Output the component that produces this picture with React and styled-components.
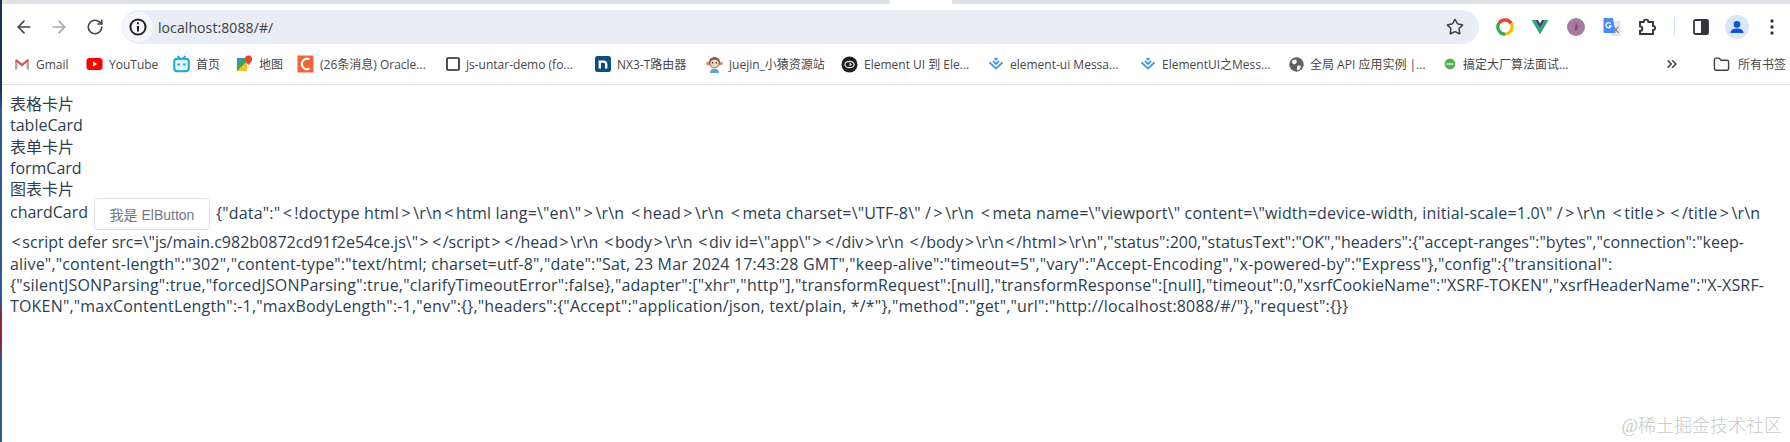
import React from "react";
import styled, { createGlobalStyle } from "styled-components";
import { ArrowLeft, ArrowRight, RotateCw, Star, ChevronsRight, Folder } from "lucide-react";

const GlobalStyle = createGlobalStyle`
  html, body {
    margin: 0;
    padding: 0;
    background: #fff;
  }
  body {
    width: 1790px;
    height: 442px;
    overflow: hidden;
    font-family: "Open Sans", "Noto Sans CJK SC", sans-serif;
  }
`;

const Page = styled.div`
  position: relative;
  height: 442px;
  &::before {
    content: "";
    position: absolute;
    left: 0;
    top: 0;
    bottom: 0;
    width: 2px;
    background: linear-gradient(
      #1c2f55 0,
      #1c2f55 90px,
      #2a5a90 110px,
      #2a5a90 300px,
      #8a2a3a 315px,
      #8a2a3a 345px,
      #2a5a90 360px
    );
  }
`;

const TabStrip = styled.div`
  height: 4px;
  background: #dee1e6;
  display: flex;
  padding-left: 890px;
`;

const ActiveTab = styled.div`
  width: 62px;
  background: #fff;
`;

const Toolbar = styled.div`
  height: 40px;
  display: flex;
  align-items: flex-start;
  padding: 6px 0 0 6px;
  box-sizing: border-box;
`;

const NavButton = styled.div`
  width: 36px;
  height: 34px;
  display: flex;
  align-items: center;
  justify-content: center;
  color: ${(p) => p.$color || "#44474a"};
`;

const AddressBar = styled.div`
  flex: none;
  width: 1357px;
  height: 34px;
  margin-left: 9px;
  margin-right: 8px;
  background: #e9edf6;
  border-radius: 17px;
  display: flex;
  align-items: center;
  padding-right: 15px;
  box-sizing: border-box;
`;

const SiteInfo = styled.div`
  width: 30px;
  height: 30px;
  margin-left: 1px;
  border-radius: 50%;
  background: #f6f8fc;
  display: flex;
  align-items: center;
  justify-content: center;
  color: #222;
`;

const Url = styled.span`
  flex: 1;
  margin-left: 5px;
  font-size: 14px;
  letter-spacing: 0.1px;
  color: #3c4043;
`;

const ExtensionIcon = styled.div`
  width: 36px;
  height: 34px;
  display: flex;
  align-items: center;
  justify-content: center;
`;

const ToolbarRule = styled.div`
  width: 1px;
  height: 18px;
  margin: 8px 8px 0 9px;
  background: #d3e3fd;
`;

const Bookmarks = styled.div`
  height: 41px;
  display: flex;
  align-items: center;
  padding-left: 14px;
  box-sizing: border-box;
  border-bottom: 1px solid #dfe1e5;
`;

const Bookmark = styled.div`
  width: ${(p) => p.$width}px;
  flex: none;
  display: flex;
  align-items: center;
  gap: ${(p) => p.$gap ?? 6}px;
  font-size: 12px;
  color: #474747;
  white-space: nowrap;
`;

const BookmarkRule = styled.div`
  width: 1px;
  height: 18px;
  margin: 0 18px 0 0;
  background: #d3e3fd;
`;

const Content = styled.div`
  padding: 9px 0 0 10px;
  font-size: 16px;
  line-height: 21.3px;
  color: #2c3e50;
`;

const Line = styled.div`
  white-space: nowrap;
`;

const ButtonLine = styled(Line)`
  margin: -2px 0 2px;
`;

const ResponseText = styled.span`
  letter-spacing: ${(p) => p.$spacing}px;
`;

const Angle = styled.span`
  margin: 0 ${(p) => p.$margin}px;
`;

const ElButton = styled.button`
  height: 32px;
  width: 116px;
  margin: 0 6px;
  padding: 0;
  background: #fff;
  border: 1px solid #dcdfe6;
  border-radius: 4px;
  color: #77797e;
  font-family: "Liberation Sans", "Noto Sans CJK SC", sans-serif;
  font-size: 14px;
  vertical-align: middle;
`;

const Watermark = styled.div`
  position: absolute;
  right: 8px;
  top: 414px;
  font-family: "Liberation Serif", "Noto Sans CJK SC", serif;
  font-size: 18px;
  font-weight: 300;
  line-height: 24px;
  color: #cacaca;
`;

const InfoIcon = () => (
  <svg width="20" height="20" viewBox="0 0 20 20" fill="none" stroke="currentColor" strokeWidth="2">
    <circle cx="10" cy="10" r="7.6" />
    <path d="M10 9v5.4" />
    <path d="M10 5.2v2" />
  </svg>
);

const GmailIcon = () => (
  <svg width="16" height="16" viewBox="0 0 16 16">
    <path d="M1 13.5V4.5h2.4v9zM12.6 13.5v-9H15v9z" fill="#b9a5a3" />
    <path d="M1 4.6 2.2 3 8 7.6 13.8 3 15 4.6 8 10.4z" fill="#d0544a" />
  </svg>
);

const YoutubeIcon = () => (
  <svg width="17" height="16" viewBox="0 0 17 16">
    <rect x="0.5" y="2" width="16" height="12" rx="3" fill="#f00" />
    <path d="M7 5.4 11.2 8 7 10.6z" fill="#fff" />
  </svg>
);

const BilibiliIcon = () => (
  <svg width="17" height="18" viewBox="0 0 17 18" fill="none">
    <path d="M4.6 0.8 7 3.6M12.4 0.8 10 3.6" stroke="#1ea6d6" strokeWidth="1.8" />
    <rect x="1.2" y="3.8" width="14.6" height="12.4" rx="3" fill="#dff3fa" stroke="#1ea6d6" strokeWidth="2" />
    <path d="M4.4 9.4h2.4M10.2 9.4h2.4" stroke="#1ea6d6" strokeWidth="2" />
  </svg>
);

const MapsIcon = () => (
  <svg width="17" height="18" viewBox="0 0 17 18">
    <path d="M1 3h10v13H1z" fill="#34a853" />
    <path d="M1 16 11 6v10z" fill="#fbc02d" />
    <path d="M1 3h6L1 9z" fill="#4285f4" />
    <path d="M12.5 0.5a3.6 3.6 0 0 1 3.6 3.6c0 2.5-3.6 6-3.6 6s-3.6-3.5-3.6-6a3.6 3.6 0 0 1 3.6-3.6z" fill="#ea4335" />
  </svg>
);

const CsdnIcon = () => (
  <svg width="17" height="18" viewBox="0 0 17 18">
    <rect x="0.5" y="0.5" width="16" height="17" fill="#f0643c" />
    <path d="M12.5 4.5a5 5.2 0 1 0 0 9" fill="none" stroke="#fff" strokeWidth="2" />
  </svg>
);

const PageIcon = () => (
  <svg width="14" height="14" viewBox="0 0 14 14" fill="none">
    <rect x="1" y="1" width="12" height="12" rx="1" stroke="#222" strokeWidth="1.6" />
  </svg>
);

const NuxtIcon = () => (
  <svg width="16" height="16" viewBox="0 0 16 16">
    <rect width="16" height="16" rx="2.5" fill="#0f4c81" />
    <path d="M4.8 12.5V5.6h4a2.4 2.4 0 0 1 2.4 2.4v4.5" fill="none" stroke="#fff" strokeWidth="2.4" />
  </svg>
);

const MonkeyIcon = () => (
  <svg width="17" height="17" viewBox="0 0 17 17">
    <circle cx="2" cy="7.5" r="1.8" fill="#c98f6a" />
    <circle cx="15" cy="7.5" r="1.8" fill="#c98f6a" />
    <circle cx="8.5" cy="6.5" r="5.6" fill="#8a5a44" />
    <ellipse cx="8.5" cy="7.6" rx="4.2" ry="3.8" fill="#f5d5b8" />
    <circle cx="6.6" cy="6.8" r="0.8" fill="#222" />
    <circle cx="10.4" cy="6.8" r="0.8" fill="#222" />
    <path d="M4 17c0-3 2-4.6 4.5-4.6S13 14 13 17z" fill="#5aa5c8" />
  </svg>
);

const ElementDarkIcon = () => (
  <svg width="17" height="17" viewBox="0 0 17 17">
    <circle cx="8.5" cy="8.5" r="8" fill="#1d1f24" />
    <ellipse cx="8.5" cy="8.5" rx="4.6" ry="3.2" fill="none" stroke="#e6e6e6" strokeWidth="1.3" />
    <path d="M8.5 6.5 11 8.5 8.5 10.5z" fill="#e6e6e6" />
  </svg>
);

const ElementBlueIcon = () => (
  <svg width="16" height="16" viewBox="0 0 16 16" fill="none" stroke="#4a9ae8" strokeWidth="1.9">
    <path d="M1.5 6.5 8 12.5l6.5-6" />
    <path d="M5 5 8 8l3-3" />
    <path d="M6.7 2.2 8 3.6l1.3-1.4" />
  </svg>
);

const GlobeIcon = () => (
  <svg width="15" height="15" viewBox="0 0 15 15">
    <circle cx="7.5" cy="7.5" r="7.2" fill="#5f6368" />
    <path d="M3 3.5 7 2.6 8 5 5.6 7.4 3.4 6.6zM9 8.2l3.2.8-1.6 3.6-2.2 1-.6-3z" fill="#fff" />
  </svg>
);

const ArticleIcon = () => (
  <svg width="12" height="12" viewBox="0 0 12 12">
    <circle cx="6" cy="6" r="5.4" fill="#4eb04e" />
    <path d="M2.5 6h7" stroke="#d9f2d9" strokeWidth="1.6" />
  </svg>
);

const ChromeRingIcon = () => (
  <svg width="18" height="18" viewBox="0 0 18 18" fill="none" strokeWidth="3.2">
    <path d="M3 5.2A7 7 0 0 1 15.2 5.5" stroke="#ea4335" />
    <path d="M15.2 5.5A7 7 0 0 1 9.5 16" stroke="#fbbc04" />
    <path d="M9.5 16A7 7 0 0 1 3 5.2" stroke="#34a853" />
  </svg>
);

const VueIcon = () => (
  <svg width="18" height="16" viewBox="0 0 20 18">
    <path d="M0.5 1h4.2L10 10.4 15.3 1h4.2L10 17.5z" fill="#35a37f" />
    <path d="M4.7 1h3L10 5l2.3-4h3L10 10.4z" fill="#34495e" />
  </svg>
);

const AvatarDotIcon = () => (
  <svg width="18" height="18" viewBox="0 0 18 18">
    <circle cx="9" cy="9" r="9" fill="#a77aa4" />
    <path d="M9 4.5 11 9l-2 4.5-1.5-2.5z" fill="#8a4f5c" />
  </svg>
);

const TranslateIcon = () => (
  <svg width="18" height="20" viewBox="0 0 18 20">
    <path d="M8 4h9.5v15H8z" fill="#e4e7ec" />
    <path d="M10.5 9.5l5 6.5M15.5 9.5l-5 6.5" stroke="#6f7a8a" strokeWidth="1.1" />
    <path d="M0.5 1h9.5l2.4 15H0.5z" fill="#4a8af4" />
    <path d="M7.6 6.6a2.6 2.6 0 1 0 .4 2.4H5.8" fill="none" stroke="#fff" strokeWidth="1.3" />
  </svg>
);

const PuzzleIcon = () => (
  <svg width="18" height="20" viewBox="0 0 18 20" fill="none" stroke="#33373c" strokeWidth="1.9">
    <path d="M2 5h3.6a2.4 2.4 0 0 1 4.8 0H15v4a2 2 0 0 1 0 4.2V17H2v-3a2.3 2.3 0 0 0 0-4.6z" />
  </svg>
);

const SidePanelIcon = () => (
  <svg width="16" height="16" viewBox="0 0 16 16">
    <rect x="1" y="1" width="14" height="14" rx="1.6" fill="none" stroke="#33373c" strokeWidth="1.8" />
    <rect x="8" y="1" width="7" height="14" fill="#33373c" />
  </svg>
);

const ProfileIcon = () => (
  <svg width="24" height="24" viewBox="0 0 24 24">
    <circle cx="12" cy="12" r="12" fill="#d9e6fb" />
    <circle cx="12" cy="9.4" r="3.3" fill="#0b57d0" />
    <path d="M5.5 18c0-3 3-4.4 6.5-4.4s6.5 1.4 6.5 4.4z" fill="#0b57d0" />
  </svg>
);

const MenuDots = () => (
  <svg width="4" height="18" viewBox="0 0 4 18" fill="#33373c">
    <circle cx="2" cy="3" r="1.7" />
    <circle cx="2" cy="9" r="1.7" />
    <circle cx="2" cy="15" r="1.7" />
  </svg>
);

const bookmarks = [
  { label: "Gmail", width: 72, icon: <GmailIcon /> },
  { label: "YouTube", width: 87, icon: <YoutubeIcon /> },
  { label: "首页", width: 63, icon: <BilibiliIcon /> },
  { label: "地图", width: 61, icon: <MapsIcon /> },
  { label: "(26条消息) Oracle...", width: 149, icon: <CsdnIcon /> },
  { label: "js-untar-demo (fo...", width: 149, icon: <PageIcon /> },
  { label: "NX3-T路由器", width: 111, icon: <NuxtIcon /> },
  { label: "juejin_小猿资源站", width: 135, icon: <MonkeyIcon /> },
  { label: "Element UI 到 Ele...", width: 147, icon: <ElementDarkIcon /> },
  { label: "element-ui Messa...", width: 152, icon: <ElementBlueIcon /> },
  { label: "ElementUI之Mess...", width: 149, icon: <ElementBlueIcon /> },
  { label: "全局 API 应用实例 |...", width: 155, icon: <GlobeIcon /> },
  { label: "搞定大厂算法面试...", width: 220, gap: 7, icon: <ArticleIcon /> },
];

const firstLine = String.raw`{"data":"<!doctype html>\r\n<html lang=\"en\">\r\n <head>\r\n <meta charset=\"UTF-8\" />\r\n <meta name=\"viewport\" content=\"width=device-width, initial-scale=1.0\" />\r\n <title></title>\r\n`;

// the response wraps at these points in the screenshot
const wrappedLines = [
  {
    text: String.raw`<script defer src=\"js/main.c982b0872cd91f2e54ce.js\"></script></head>\r\n <body>\r\n <div id=\"app\"></div>\r\n </body>\r\n</html>\r\n","status":200,"statusText":"OK","headers":{"accept-ranges":"bytes","connection":"keep-`,
    spacing: 0,
    angle: 1.6,
  },
  {
    text: String.raw`alive","content-length":"302","content-type":"text/html; charset=utf-8","date":"Sat, 23 Mar 2024 17:43:28 GMT","keep-alive":"timeout=5","vary":"Accept-Encoding","x-powered-by":"Express"},"config":{"transitional":`,
    spacing: 0.18,
  },
  {
    text: String.raw`{"silentJSONParsing":true,"forcedJSONParsing":true,"clarifyTimeoutError":false},"adapter":["xhr","http"],"transformRequest":[null],"transformResponse":[null],"timeout":0,"xsrfCookieName":"XSRF-TOKEN","xsrfHeaderName":"X-XSRF-`,
    spacing: 0.18,
  },
  {
    text: String.raw`TOKEN","maxContentLength":-1,"maxBodyLength":-1,"env":{},"headers":{"Accept":"application/json, text/plain, */*"},"method":"get","url":"http://localhost:8088/#/"},"request":{}}`,
    spacing: 0.18,
  },
];

// the angle brackets sit wider in the original font
const withAngles = (text, margin) =>
  text.split(/([<>])/).map((part, index) =>
    part === "<" || part === ">" ? <Angle key={index} $margin={margin}>{part}</Angle> : part
  );

const App = () => {
  return (
    <Page>
      <GlobalStyle />
      <TabStrip>
        <ActiveTab />
      </TabStrip>
      <Toolbar>
        <NavButton><ArrowLeft size={20} strokeWidth={2} /></NavButton>
        <NavButton $color="#a5a8ac"><ArrowRight size={20} strokeWidth={2} /></NavButton>
        <NavButton><RotateCw size={18} strokeWidth={2.2} /></NavButton>
        <AddressBar>
          <SiteInfo><InfoIcon /></SiteInfo>
          <Url>localhost:8088/#/</Url>
          <Star size={18} strokeWidth={2} color="#3c4043" />
        </AddressBar>
        <ExtensionIcon><ChromeRingIcon /></ExtensionIcon>
        <ExtensionIcon><VueIcon /></ExtensionIcon>
        <ExtensionIcon><AvatarDotIcon /></ExtensionIcon>
        <ExtensionIcon><TranslateIcon /></ExtensionIcon>
        <ExtensionIcon><PuzzleIcon /></ExtensionIcon>
        <ToolbarRule />
        <ExtensionIcon><SidePanelIcon /></ExtensionIcon>
        <ExtensionIcon><ProfileIcon /></ExtensionIcon>
        <ExtensionIcon><MenuDots /></ExtensionIcon>
      </Toolbar>
      <Bookmarks>
        {bookmarks.map((item) => (
          <Bookmark key={item.label} $width={item.width} $gap={item.gap}>
            {item.icon}
            <span>{item.label}</span>
          </Bookmark>
        ))}
        <Bookmark $width={31}>
          <ChevronsRight size={16} strokeWidth={2.2} color="#3c4043" />
        </Bookmark>
        <BookmarkRule />
        <Bookmark $width={80} $gap={8}>
          <Folder size={17} strokeWidth={2} color="#3c4043" />
          <span>所有书签</span>
        </Bookmark>
      </Bookmarks>
      <Content>
        <Line>表格卡片</Line>
        <Line>tableCard</Line>
        <Line>表单卡片</Line>
        <Line>formCard</Line>
        <Line>图表卡片</Line>
        <ButtonLine>
          chardCard
          <ElButton>我是 ElButton</ElButton>
          <ResponseText $spacing={0.18}>{withAngles(firstLine, 2.4)}</ResponseText>
        </ButtonLine>
        {wrappedLines.map((line) => (
          <Line key={line.text}>
            <ResponseText $spacing={line.spacing}>{withAngles(line.text, line.angle)}</ResponseText>
          </Line>
        ))}
      </Content>
      <Watermark>@稀土掘金技术社区</Watermark>
    </Page>
  );
};

export default App;
